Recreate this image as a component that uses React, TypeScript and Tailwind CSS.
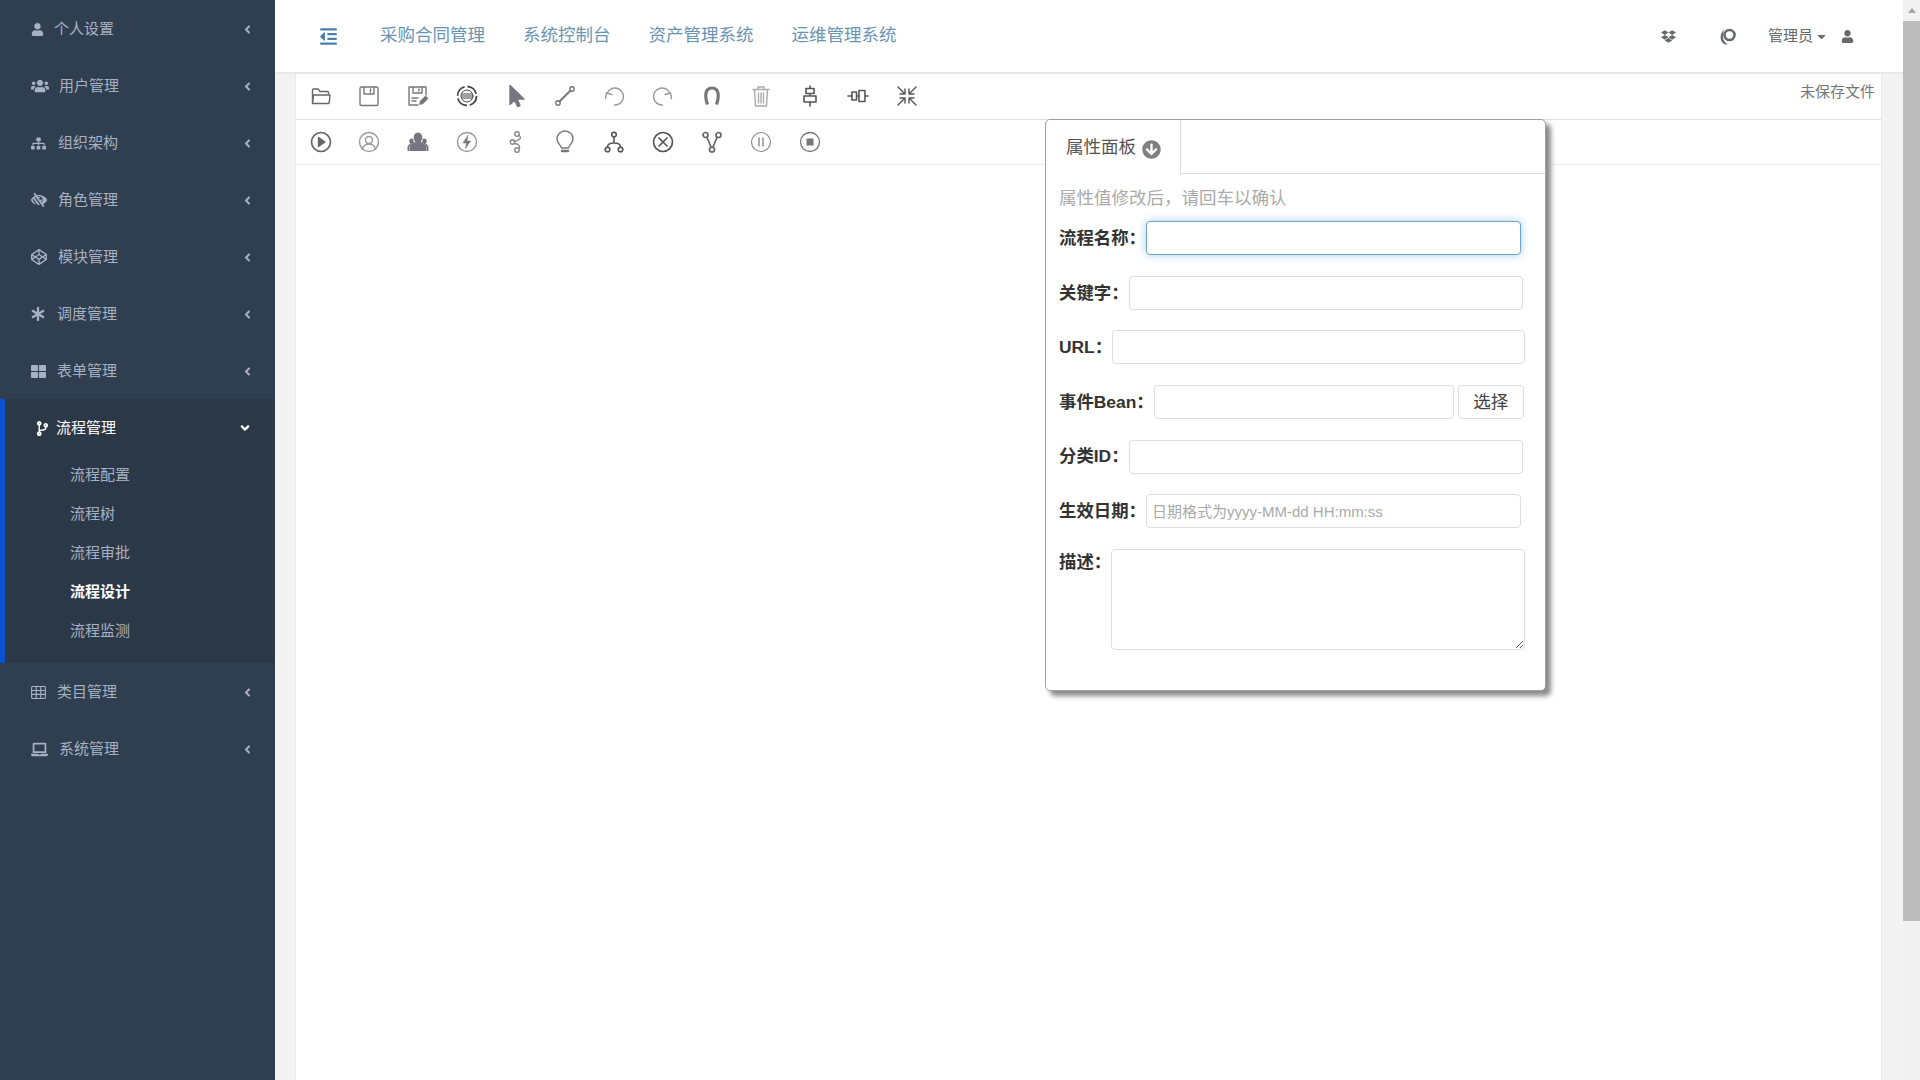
import { ReactNode } from "react";
import {
  FaAngleDown,
  FaAngleLeft,
  FaArrowCircleDown,
  FaAsterisk,
  FaCaretDown,
  FaCodeBranch,
  FaCodepen,
  FaDropbox,
  FaLaptop,
  FaLowVision,
  FaOutdent,
  FaSitemap,
  FaThLarge,
  FaUser,
  FaUsers,
} from "react-icons/fa";

const font = "font-['Liberation_Sans','Noto_Sans_CJK_SC',sans-serif]";

const GridIcon = () => (
  <svg viewBox="0 0 16 14" width="15" height="13" fill="none" stroke="currentColor" strokeWidth="1.2">
    <rect x="0.6" y="0.6" width="14.8" height="12.8" rx="1" />
    <path d="M0.6 4.800h14.800M0.6 9h14.800M5.500 0.600v12.800M10.500 0.600v12.800" />
  </svg>
);

const RingIcon = () => (
  <svg viewBox="0 0 18 18" width="18" height="18" fill="none">
    <circle cx="10.500" cy="8" r="5" stroke="currentColor" strokeWidth="2.600" />
    <path d="M5 2.500C1.500 6 .5 11 3 15c1.500 2.300 4 2.800 6 2.500-2.800-1.300-4.800-4-5-7.500C3.800 7.500 4.200 4.800 5 2.500z" fill="currentColor" />
  </svg>
);

const menuTop = [
  { label: "个人设置", icon: <FaUser size={13} />, cell: "w-[23px]" },
  { label: "用户管理", icon: <FaUsers size={18} />, cell: "w-[28px]" },
  { label: "组织架构", icon: <FaSitemap size={15} />, cell: "w-[27px]" },
  { label: "角色管理", icon: <FaLowVision size={16} />, cell: "w-[27px]" },
  { label: "模块管理", icon: <FaCodepen size={16} />, cell: "w-[27px]" },
  { label: "调度管理", icon: <FaAsterisk size={14} />, cell: "w-[26px]" },
  { label: "表单管理", icon: <FaThLarge size={15} />, cell: "w-[26px]" },
];

const subMenu = ["流程配置", "流程树", "流程审批", "流程设计", "流程监测"];

const menuBottom = [
  { label: "类目管理", icon: <GridIcon />, cell: "w-[26px]" },
  { label: "系统管理", icon: <FaLaptop size={17} />, cell: "w-[28px]" },
];

const navLinks = ["采购合同管理", "系统控制台", "资产管理系统", "运维管理系统"];

const MenuRow = ({ label, icon, cell }: { label: string; icon: ReactNode; cell: string }) => (
  <div className="flex h-[57px] items-center pl-[31px] pr-[21px] pt-[1px] text-[15px] text-[#a7b1c2]">
    <span className={`flex shrink-0 items-center ${cell}`}>{icon}</span>
    <span>{label}</span>
    <FaAngleLeft size={13} className="ml-auto" />
  </div>
);

const Sidebar = () => (
  <aside className="w-[275px] shrink-0 bg-[#2f3f50]">
    {menuTop.map((m) => (
      <MenuRow key={m.label} {...m} />
    ))}
    <div className="border-l-[5px] border-[#0a52d0] bg-[#2b3848] pb-[12px]">
      <div className="flex h-[57px] items-center pl-[30px] pr-[23px] pt-[1px] text-[15px] text-white">
        <span className="flex w-[21px] shrink-0 items-center">
          <FaCodeBranch size={15} />
        </span>
        <span>流程管理</span>
        <FaAngleDown size={14} className="ml-auto" />
      </div>
      {subMenu.map((s) => (
        <div
          key={s}
          className={`flex h-[39px] items-center pl-[65px] text-[15px] ${
            s === "流程设计" ? "font-bold text-white" : "text-[#a7b1c2]"
          }`}
        >
          {s}
        </div>
      ))}
    </div>
    {menuBottom.map((m) => (
      <MenuRow key={m.label} {...m} />
    ))}
  </aside>
);

const Header = () => (
  <header className="flex h-[72px] shrink-0 items-center bg-white pl-[44px]">
    <FaOutdent size={19} className="mr-[42px] text-[#4a80ad]" />
    <nav className="flex gap-[38px] pb-[1px] text-[17.5px] text-[#6a94b3]">
      {navLinks.map((n) => (
        <span key={n}>{n}</span>
      ))}
    </nav>
    <div className="ml-auto flex items-center pr-[49px] text-[#676a6c]">
      <FaDropbox size={15} />
      <span className="ml-[43px] flex">
        <RingIcon />
      </span>
      <span className="ml-[31px] text-[15px]">管理员</span>
      <FaCaretDown size={13} className="ml-[2px]" />
      <FaUser size={13} className="ml-[13px]" />
    </div>
  </header>
);

const Svg = ({ children, className = "text-[#666]" }: { children: ReactNode; className?: string }) => (
  <svg
    viewBox="0 0 24 24"
    width="24"
    height="24"
    fill="none"
    stroke="currentColor"
    strokeWidth="1.4"
    strokeLinecap="round"
    strokeLinejoin="round"
    className={className}
  >
    {children}
  </svg>
);

const toolsTop = [
  <Svg key="open">
    <path d="M3.5 19.500V6a1 1 0 0 1 1-1h4.500l2 2.500h7.500a1 1 0 0 1 1 1v1.500" />
    <path d="M3.500 19.500 4.500 11h16.500l-.8 7.600a1 1 0 0 1-1 .9z" />
  </Svg>,
  <Svg key="save" className="text-[#777]">
    <rect x="3" y="3" width="18" height="18.500" rx="1.500" />
    <path d="M7 3v7h10V3M13.500 5v3" />
  </Svg>,
  <Svg key="saveas" className="text-[#777]">
    <path d="M20 11V3H3v18h9" />
    <path d="M7 3v6h9V3M13 5v2M6 14h6M6 17h4" />
    <path d="m14 20 .5-2.500 5-5 2 2-5 5z" fill="currentColor" />
  </Svg>,
  <Svg key="target" className="text-[#444]">
    <circle cx="12" cy="12" r="9.500" strokeWidth="1.800" strokeDasharray="12 3" strokeLinecap="butt" />
    <circle cx="12" cy="12" r="6" strokeWidth="1" />
    <path d="M7 10h10M6.500 12h11M7 14h10" strokeWidth="1.200" strokeLinecap="butt" />
  </Svg>,
  <Svg key="pointer" className="text-[#77757f]">
    <path d="M6 1.500v19l4.500-4.500 3 6.500 2.500-1-2.800-6.500H20z" fill="currentColor" />
  </Svg>,
  <Svg key="line" className="text-[#777]">
    <circle cx="19" cy="5" r="2.200" />
    <circle cx="5" cy="19" r="2.200" />
    <path d="M17.500 6.500 6.500 17.500" strokeWidth="2" />
  </Svg>,
  <Svg key="undo" className="text-[#999]">
    <path d="M5 9.500A8.500 8.500 0 1 1 12.500 21" />
    <path d="M3.500 14.500 4.500 9l5.500 1.500" />
  </Svg>,
  <Svg key="redo" className="text-[#999]">
    <path d="M19 9.500A8.500 8.500 0 1 0 11.500 21" />
    <path d="M20.500 14.500 19.500 9 14 10.500" />
  </Svg>,
  <Svg key="magnet" className="text-[#777]">
    <path d="M7.500 20.500C4.500 12 5 4 12 4s7.500 8 4.500 16.500" strokeWidth="3.200" strokeLinecap="butt" />
  </Svg>,
  <Svg key="trash" className="text-[#aaa]">
    <path d="M4 5.500h16M9 5.500V3h6v2.500M5.500 5.500 6.500 22h11l1-16.500" />
    <path d="M9.500 9v10M12 9v10M14.500 9v10" />
  </Svg>,
  <Svg key="alignv" className="text-[#555]">
    <path d="M12 2v20" strokeWidth="1.600" />
    <rect x="8" y="4.500" width="8" height="5" fill="white" strokeWidth="1.600" />
    <rect x="6" y="12" width="12" height="6" fill="white" strokeWidth="1.600" />
  </Svg>,
  <Svg key="alignh" className="text-[#555]">
    <path d="M2 12h20" strokeWidth="1.600" />
    <rect x="6" y="8" width="4.500" height="8" fill="white" strokeWidth="1.600" />
    <rect x="13" y="6.500" width="6" height="11" fill="white" strokeWidth="1.600" />
  </Svg>,
  <Svg key="compress" className="text-[#555]">
    <path d="M3 3l6.500 6.500M5 10h5V5M21 3l-6.500 6.500M19 10h-5V5M3 21l6.500-6.500M5 14h5v5M21 21l-6.500-6.500M19 14h-5v5" />
  </Svg>,
];

const toolsBottom = [
  <Svg key="start" className="text-[#666]">
    <circle cx="12" cy="12" r="9.500" strokeWidth="1.700" />
    <path d="M9.500 7.500v9l6.500-4.500z" fill="currentColor" />
  </Svg>,
  <Svg key="task" className="text-[#999]">
    <circle cx="12" cy="12" r="9.500" />
    <circle cx="12" cy="10" r="3.500" />
    <path d="M5.500 19c1-3.500 3.500-5 6.500-5s5.500 1.500 6.500 5" />
  </Svg>,
  <Svg key="group" className="text-[#77757f]">
    <g fill="currentColor" stroke="none">
      <path d="M12 2.500c2.800 0 4.300 2.200 4.300 4.800 0 1.900-.8 3.600-1.700 4.700 2.800 1 4.900 2.400 5.400 4.500V21H4v-4.500c.5-2.100 2.600-3.500 5.400-4.500-.9-1.100-1.700-2.800-1.700-4.700 0-2.600 1.500-4.800 4.300-4.800z" />
      <path d="M5.800 8.500c.6 0 1.100.1 1.500.4-.1 1.300.3 2.600 1 3.600-2.400 1-4 2.300-4.700 4.300V21H1.500v-4c.2-1.500 1.600-2.600 3-3.200-.7-.8-1.200-1.800-1.200-2.900 0-1.400 1-2.400 2.500-2.400z" />
      <path d="M18.200 8.500c-.6 0-1.100.1-1.500.4.100 1.300-.3 2.600-1 3.600 2.400 1 4 2.300 4.700 4.300V21h2.100v-4c-.2-1.500-1.600-2.600-3-3.200.7-.8 1.200-1.800 1.200-2.900 0-1.400-1-2.400-2.500-2.400z" />
    </g>
  </Svg>,
  <Svg key="bolt" className="text-[#999]">
    <circle cx="12" cy="12" r="9.500" />
    <path d="M13 5.500 8 13h3.500l-1 5.500 5-7.500H12z" fill="#777" stroke="#777" strokeWidth="0.600" />
  </Svg>,
  <Svg key="nodes" className="text-[#888]">
    <circle cx="13" cy="4" r="2.200" />
    <circle cx="8.500" cy="12" r="2.200" />
    <circle cx="13" cy="20" r="2.200" />
    <path d="M15 5.500c3 2 1 4.500-4.500 6M10.500 13.500c5 .5 6 3.500 4.500 5" />
  </Svg>,
  <Svg key="bulb" className="text-[#777]">
    <path d="M8.500 18C8 15 4 13.500 4 9a8 8 0 0 1 16 0c0 4.500-4 6-4.500 9z" />
    <path d="M9 21h6" strokeWidth="2.400" />
  </Svg>,
  <Svg key="tree" className="text-[#555]">
    <circle cx="12" cy="4.500" r="2.300" strokeWidth="1.600" />
    <circle cx="5.500" cy="19.500" r="2.300" strokeWidth="1.600" />
    <circle cx="18.500" cy="19.500" r="2.300" strokeWidth="1.600" />
    <path d="M12 7v6M5.500 17c0-3 2-4 6.500-4s6.500 1 6.500 4" strokeWidth="1.600" />
  </Svg>,
  <Svg key="cancel" className="text-[#555]">
    <circle cx="12" cy="12" r="9.500" strokeWidth="1.700" />
    <path d="m8 8 8 8M16 8l-8 8" strokeWidth="1.700" />
  </Svg>,
  <Svg key="fork" className="text-[#666]">
    <circle cx="5.500" cy="5" r="2.500" strokeWidth="1.700" />
    <circle cx="18.500" cy="5" r="2.500" strokeWidth="1.700" />
    <circle cx="12" cy="19.500" r="2.500" strokeWidth="1.700" />
    <path d="M7 7.500 11 17M17 7.500 13 17" strokeWidth="1.700" />
  </Svg>,
  <Svg key="pause" className="text-[#888]">
    <circle cx="12" cy="12" r="9.500" strokeWidth="1.100" />
    <path d="M10 8v8M14 8v8" strokeWidth="1.400" />
  </Svg>,
  <Svg key="stop" className="text-[#777]">
    <circle cx="12" cy="12" r="9.500" strokeWidth="1.300" />
    <rect x="8.500" y="8.500" width="7" height="7" fill="currentColor" stroke="none" />
  </Svg>,
];

const labelCls = "whitespace-nowrap font-bold text-[17.4px] text-[#333]";
const inputCls =
  "h-[34px] rounded-[4px] border border-[#ddd] bg-white px-[5px] text-[15px] outline-none placeholder:text-[#aaa]";

const PropertyPanel = () => (
  <div className="absolute left-[749px] top-[45px] w-[501px] rounded-[5px] border border-[#a0a0a0] bg-white shadow-[5px_5px_5px_#8a8a8a]">
    <div className="flex h-[54px] border-b border-[#ddd]">
      <div className="-mb-px flex w-[135px] items-center rounded-tl-[5px] border-r border-[#ddd] bg-white pl-[20px] text-[17.5px] text-[#555]">
        属性面板
        <FaArrowCircleDown size={19} className="ml-[6px] mt-[4px] text-[#808080]" />
      </div>
    </div>
    <div className="pb-[40px] pl-[13px]">
      <p className="flex h-[47px] items-center pt-[1px] text-[17.5px] text-[#aaa]">属性值修改后，请回车以确认</p>
      <div className="flex flex-col gap-[20.7px]">
        <div className="flex items-center">
          <span className={labelCls}>流程名称：</span>
          <input className="h-[34px] w-[375px] rounded-[4px] border border-[#6fa3cc] bg-white shadow-[0_0_8px_rgba(102,175,233,0.6)] outline-none" />
        </div>
        <div className="flex items-center">
          <span className={labelCls}>关键字：</span>
          <input className={`${inputCls} w-[394px]`} />
        </div>
        <div className="flex items-center">
          <span className={`${labelCls} w-[53px]`}>URL：</span>
          <input className={`${inputCls} w-[413px]`} />
        </div>
        <div className="flex items-center">
          <span className={`${labelCls} pb-[1px]`}>事件Bean：</span>
          <input className={`${inputCls} w-[300px]`} />
          <button className="ml-[4px] h-[34px] w-[66px] rounded-[4px] border border-[#ddd] bg-white text-[17.5px] text-[#444]">
            选择
          </button>
        </div>
        <div className="flex items-center">
          <span className={`${labelCls} pb-[1px]`}>分类ID：</span>
          <input className={`${inputCls} w-[394px]`} />
        </div>
        <div className="flex items-center">
          <span className={labelCls}>生效日期：</span>
          <input className={`${inputCls} w-[375px]`} placeholder="日期格式为yyyy-MM-dd HH:mm:ss" />
        </div>
        <div className="flex items-start">
          <span className={labelCls}>描述：</span>
          <textarea className="h-[101px] w-[414px] rounded-[4px] border border-[#ddd] bg-white outline-none" />
        </div>
      </div>
    </div>
  </div>
);

const Workspace = () => (
  <section className="relative ml-[20px] mr-[21px] flex-1 border-x border-[#e7eaec] bg-white">
    <div className="flex h-[46px] items-center border-b border-[#e2e2e2] pb-[1px]">
      {toolsTop.map((icon, i) => (
        <span key={i} className="-ml-[0.1px] flex w-[49px] justify-center first:ml-0">
          {icon}
        </span>
      ))}
      <span className="ml-auto self-start pr-[6px] pt-[7px] text-[15px] text-[#777]">未保存文件</span>
    </div>
    <div className="flex h-[45px] items-center border-b border-[#f0f0f0] pb-[1px]">
      {toolsBottom.map((icon, i) => (
        <span key={i} className="-ml-[0.1px] flex w-[49px] justify-center first:ml-0">
          {icon}
        </span>
      ))}
    </div>
    <PropertyPanel />
  </section>
);

const Scrollbar = () => (
  <div className="flex w-[17px] shrink-0 flex-col bg-[#f1f1f1]">
    <div className="flex h-[21px] items-center justify-center">
      <span className="h-0 w-0 border-x-[4px] border-b-[5px] border-x-transparent border-b-[#a3a3a3]" />
    </div>
    <div className="h-[900px] bg-[#bcbcbc]" />
  </div>
);

export default function App() {
  return (
    <div className={`flex h-[1080px] w-[1920px] overflow-hidden bg-[#f3f3f4] ${font}`}>
      <Sidebar />
      <main className="flex min-w-0 flex-1 flex-col">
        <Header />
        <div className="h-[2px] shrink-0 bg-[#e7eaec]" />
        <Workspace />
      </main>
      <Scrollbar />
    </div>
  );
}
